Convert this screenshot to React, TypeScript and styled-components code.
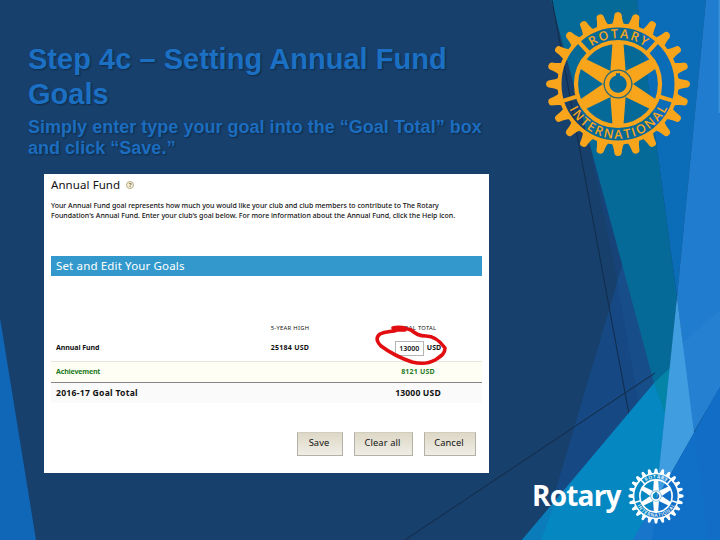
import styled, { createGlobalStyle } from 'styled-components';

const GlobalStyle = createGlobalStyle`
	* {
		box-sizing: border-box;
	}

	body {
		margin: 0;
		background: #17406d;
	}
`;

const humanist = "'Noto Sans', 'Open Sans', sans-serif";

const Slide = styled.main`
	position: relative;
	display: grid;
	grid-template-columns: 489px 1fr;
	width: 720px;
	height: 540px;
	overflow: hidden;
	background: #17406d;
	font-family: 'Liberation Sans', Arial, sans-serif;
`;

const Backdrop = styled.svg`
	position: absolute;
	inset: 0;
`;

const Content = styled.section`
	position: relative;
	display: flex;
	flex-direction: column;
	padding-top: 42px;
`;

const Title = styled.h1`
	margin: 0 0 0 28px;
	height: 75px;
	color: #1c70c4;
	font-size: 29px;
	letter-spacing: 0.03px;
	line-height: 35px;
	white-space: nowrap;
	text-shadow: 1px 1px 2px rgba(0, 0, 0, 0.35);
`;

const Subtitle = styled.p`
	margin: 0 0 0 28px;
	height: 57px;
	color: #1c6dbf;
	font-size: 18px;
	font-weight: bold;
	letter-spacing: 0.02px;
	line-height: 20.5px;
	white-space: nowrap;
	text-shadow: 1px 1px 2px rgba(0, 0, 0, 0.35);
`;

const Panel = styled.div`
	position: relative;
	display: flex;
	flex-direction: column;
	margin-left: 44px;
	height: 299px;
	padding: 3px 7px 0;
	background: #fff;
	color: #111;
	font-family: ${humanist};
	white-space: nowrap;
`;

const PanelHeading = styled.h2`
	display: flex;
	align-items: center;
	gap: 6px;
	margin: 0;
	height: 15px;
	font-size: 11.5px;
	font-weight: 400;
	letter-spacing: 0.08px;
`;

const HelpIcon = styled.span`
	display: grid;
	place-items: center;
	width: 8px;
	height: 8px;
	border: 1px solid #b9ae84;
	border-radius: 50%;
	background: #f5f0dc;
	color: #7d7344;
	font-size: 6px;
	font-weight: 700;
	letter-spacing: 0;
	line-height: 6px;
`;

const Intro = styled.p`
	margin: 9px 0 0;
	height: 55px;
	font-size: 7px;
	font-weight: 500;
	line-height: 10.4px;
`;

const IntroLine = styled.span<{ $spacing: number }>`
	display: block;
	letter-spacing: ${(props) => props.$spacing}px;
`;

const SectionBar = styled.h3`
	margin: 0 0 42px;
	padding-left: 5px;
	height: 20px;
	background: #3399cc;
	color: #fff;
	font-size: 11.5px;
	font-weight: 400;
	letter-spacing: 0.15px;
	line-height: 20px;
`;

const Row = styled.div<{ $kind: 'head' | 'goal' | 'achievement' | 'total' }>`
	display: grid;
	grid-template-columns: 1fr 128px 128px;
	align-items: center;
	padding-left: 5px;
	padding-bottom: ${(props) => (props.$kind === 'goal' ? 3 : 0)}px;
	height: ${(props) => ({ head: 20, goal: 23, achievement: 21, total: 21 })[props.$kind]}px;
	background: ${(props) =>
		({ head: '#fff', goal: '#fff', achievement: '#fefef4', total: '#fafafa' })[props.$kind]};
	border-top: ${(props) =>
		({ head: 0, goal: 0, achievement: '1px solid #e6e6e0', total: '1px solid #858585' })[props.$kind]};
	color: ${(props) => (props.$kind === 'achievement' ? '#1f7a1f' : '#111')};
	font-size: ${(props) => ({ head: 5.8, goal: 7, achievement: 7, total: 8.6 })[props.$kind]}px;
	font-weight: ${(props) => (props.$kind === 'head' ? 400 : 700)};
	line-height: 12px;
`;

const Cell = styled.span<{ $spacing?: number }>`
	display: flex;
	align-items: center;
	justify-content: center;
	gap: 3px;
	letter-spacing: ${(props) => props.$spacing ?? 0}px;

	&:first-child {
		justify-content: flex-start;
	}
`;

const GoalInput = styled.span`
	width: 29px;
	height: 15px;
	border: 1px solid #b5b5b5;
	font-weight: 600;
	line-height: 14px;
	text-align: center;
`;

const Actions = styled.div`
	display: flex;
	justify-content: flex-end;
	gap: 11px;
	margin: 29px 6px 0 0;
`;

const Button = styled.button<{ $width: number }>`
	width: ${(props) => props.$width}px;
	height: 24px;
	padding: 0 2px 3px 0;
	border: 1px solid #b4b1a7;
	border-top-color: #d2cebe;
	background: linear-gradient(#ddd8c6, #efede6);
	color: #111;
	font-family: ${humanist};
	font-size: 9.3px;
	letter-spacing: 0.1px;
`;

const Scribble = styled.svg`
	position: absolute;
	left: 329px;
	top: 148px;
`;

const Brand = styled.aside`
	position: relative;
	display: flex;
	flex-direction: column;
	justify-content: space-between;
	padding: 11px 29px 15px 44px;
`;

const Emblem = styled.div`
	margin-left: 12px;
	height: 146px;
`;

const Signature = styled.div`
	display: flex;
	align-items: center;
	gap: 6px;
	height: 58px;
	color: #fff;
	font-family: 'Open Sans', 'Noto Sans', sans-serif;
	font-size: 28px;
	font-weight: 700;
`;

const Wordmark = styled.span`
	margin: -3px 0 0 -1px;
	width: 90px;
	letter-spacing: -0.8px;
`;

const teeth = Array.from({ length: 24 }, (_, i) => i * 15);
const spokes = [0, 60, 120, 180, 240, 300];
const dividers = [-43, 43, 107, -107];

type WheelProps = {
	id: string;
	size: number;
	colour: string;
	ring: string;
};

const Wheel = ({ id, size, colour, ring }: WheelProps) => (
	<svg width={size} height={size} viewBox="-73 -73 146 146" style={{ display: 'block' }}>
		<defs>
			<path id={`${id}-top`} d="M-46 0A46 46 0 0 1 46 0" />
			<path id={`${id}-bottom`} d="M-54.8 0A54.8 54.8 0 0 0 54.8 0" />
		</defs>
		<g fill={colour}>
			{teeth.map((angle) => (
				<path
					key={angle}
					transform={`rotate(${angle})`}
					d="M-7 -58C-5 -61 -4.3 -64 -3.6 -69.5Q-3 -72 0 -72Q3 -72 3.6 -69.5C4.3 -64 5 -61 7 -58Z"
				/>
			))}
			{spokes.map((angle) => (
				<path key={angle} transform={`rotate(${angle})`} d="M-5.4 -42L-7.6 -13H7.6L5.4 -42Z" />
			))}
			{dividers.map((angle) => (
				<path key={angle} transform={`rotate(${angle})`} d="M-2 -58.5H2V-42H-2Z" />
			))}
			{/* hub with its keyway cut out */}
			<path
				fillRule="evenodd"
				d="M0 -14.6A14.6 14.6 0 0 1 0 14.6A14.6 14.6 0 0 1 0 -14.6ZM-2 -10.8H2V-8.4A8.7 8.7 0 1 1 -2 -8.4Z"
			/>
		</g>
		<g fill="none" stroke={colour}>
			<circle r="58.5" strokeWidth="4" />
			<circle r="42" strokeWidth="4.2" />
		</g>
		<circle r="13.8" fill="none" stroke={ring} strokeWidth="1.2" />
		<g fill={colour} fontFamily="'Open Sans', 'Noto Sans', sans-serif" fontWeight="600">
			<text fontSize="12.5">
				<textPath href={`#${id}-top`} startOffset="44" textLength="57">
					ROTARY
				</textPath>
			</text>
			<text fontSize="12.5">
				<textPath href={`#${id}-bottom`} startOffset="26" textLength="121">
					INTERNATIONAL
				</textPath>
			</text>
		</g>
	</svg>
);

const Facets = () => (
	<Backdrop width="720" height="540" viewBox="0 0 720 540">
		<path d="M0 318L36 540H0Z" fill="#1067b8" />
		<path d="M593 157L623 263L617 279L592 157Z" fill="#174379" />
		<path d="M623 263L656 384L522 540H541Z" fill="#164983" />
		<path d="M623 263L656 384L639 404L617 280Z" fill="#174d89" />
		<path d="M551 0H637L677 297L670 368L654 383Z" fill="#066a98" />
		<path d="M552 0L629 414" stroke="#122c48" strokeWidth="1" />
		<path d="M405 540L655 373" stroke="#142b45" strokeWidth="1" />
		<path d="M637 0H706L677 297Z" fill="#0b6cb8" />
		<path d="M706 0H720V387L693 433L677 297Z" fill="#207ccf" />
		<path d="M720 310L680 345L693 433L720 387Z" fill="#2680d1" />
		<path d="M718.5 0H720V113H718.5Z" fill="#3b90da" />
		<path d="M522 540L654 383L670 368L652 540Z" fill="#0587c2" />
		<path d="M522 540L556 500L541 540Z" fill="#0a7cba" />
		<path d="M654 383L670 368L665 414Z" fill="#04849f" fillOpacity="0.75" />
		<path d="M677 297L694 433L673 470L656 500L659 470Z" fill="#409ddf" />
		<path d="M720 387L633 540H720Z" fill="#1070c8" />
		<path d="M694 433L720 387V540H708Z" fill="#126dc6" />
		<path d="M657 498L633 540H652Z" fill="#1975ca" />
	</Backdrop>
);

const App = () => (
	<>
		<GlobalStyle />
		<Slide>
			<Facets />
			<Content>
				<Title>
					Step 4c – Setting Annual Fund
					<br />
					Goals
				</Title>
				<Subtitle>
					Simply enter type your goal into the “Goal Total” box
					<br />
					and click “Save.”
				</Subtitle>
				<Panel>
					<PanelHeading>
						Annual Fund <HelpIcon>?</HelpIcon>
					</PanelHeading>
					<Intro>
						<IntroLine $spacing={-0.02}>
							Your Annual Fund goal represents how much you would like your club and club members to contribute to The Rotary
						</IntroLine>
						<IntroLine $spacing={-0.01}>
							Foundation's Annual Fund. Enter your club's goal below. For more information about the Annual Fund, click the Help icon.
						</IntroLine>
					</Intro>
					<SectionBar>Set and Edit Your Goals</SectionBar>
					<Row $kind="head">
						<Cell />
						<Cell $spacing={0.3}>5-YEAR HIGH</Cell>
						<Cell $spacing={0.3}>GOAL TOTAL</Cell>
					</Row>
					<Row $kind="goal">
						<Cell $spacing={-0.05}>Annual Fund</Cell>
						<Cell $spacing={0.25}>25184 USD</Cell>
						<Cell>
							<GoalInput>13000</GoalInput> USD
						</Cell>
					</Row>
					<Row $kind="achievement">
						<Cell $spacing={-0.15}>Achievement</Cell>
						<Cell />
						<Cell $spacing={0.2}>8121 USD</Cell>
					</Row>
					<Row $kind="total">
						<Cell $spacing={0.26}>2016-17 Goal Total</Cell>
						<Cell />
						<Cell $spacing={0.15}>13000 USD</Cell>
					</Row>
					<Actions>
						<Button $width={46}>Save</Button>
						<Button $width={59}>Clear all</Button>
						<Button $width={52}>Cancel</Button>
					</Actions>
					<Scribble width="76" height="48" viewBox="373 322 76 48">
						<path
							d="M393 328C399 326 405 328 411 330C416 334 419 336 426 336C434 336 440 341 445 348C445 354 441 356 435 360C428 364 420 364 412 362C400 358 389 352 381 346C376 341 376 337 380 334C386 331 392 332 397 330L405 330"
							fill="none"
							stroke="#e20d10"
							strokeWidth="3.6"
							strokeLinecap="round"
							strokeLinejoin="round"
						/>
					</Scribble>
				</Panel>
			</Content>
			<Brand>
				<Emblem>
					<Wheel id="emblem" size={146} colour="#f9a51c" ring="#2c6874" />
				</Emblem>
				<Signature>
					<Wordmark>Rotary</Wordmark>
					<Wheel id="signature" size={56} colour="#fff" ring="#1b86cb" />
				</Signature>
			</Brand>
		</Slide>
	</>
);

export default App;
